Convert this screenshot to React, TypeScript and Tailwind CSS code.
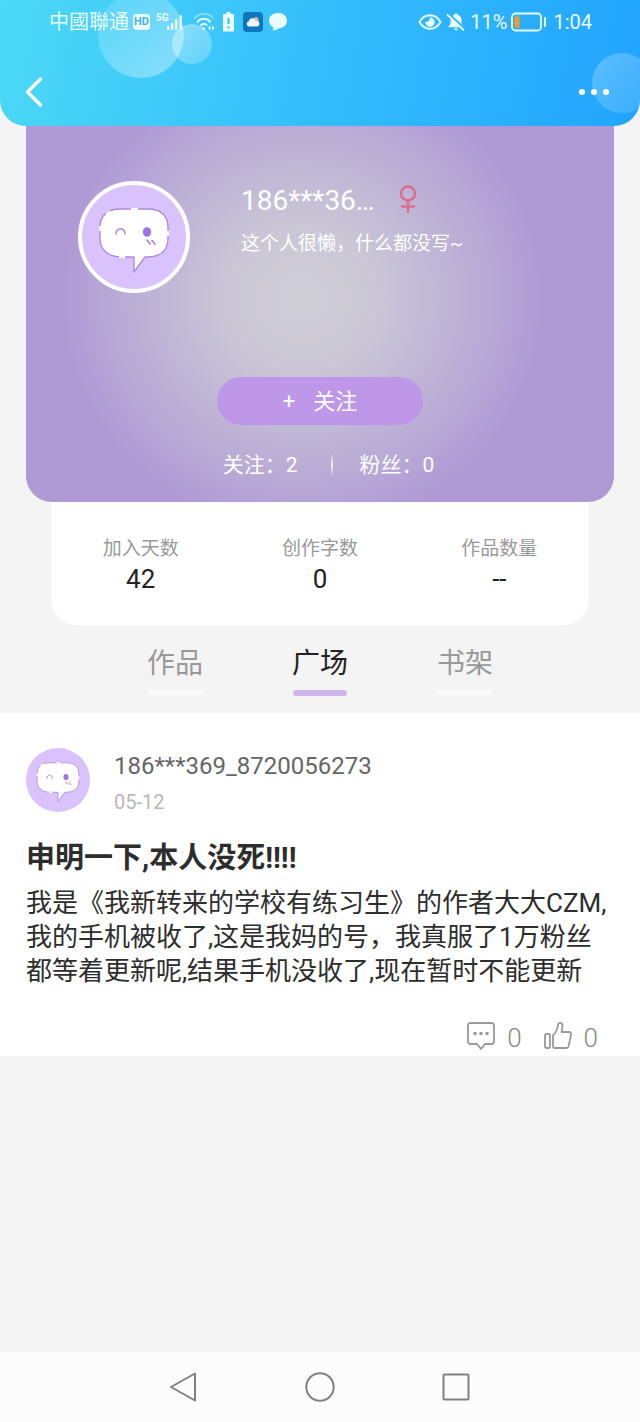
import { useState } from "react";
import clsx from "clsx";

const stats = [
  { label: "加入天数", value: "42" },
  { label: "创作字数", value: "0" },
  { label: "作品数量", value: "--" },
];

const tabs = ["作品", "广场", "书架"];

function Avatar({ className }: { className: string }) {
  return (
    <svg viewBox="0 0 104 104" className={clsx("shrink-0 rounded-full bg-[#dac3fd]", className)}>
      <path
        d="M38 24H66C80 24 86 32 86 42V53C86 66 78 72 65 72H63L52 87V72H40C26 72 18 65 18 53V42C18 31 25 24 38 24Z"
        fill="#fff"
        stroke="#b18ae0"
        strokeWidth="1.4"
        strokeLinejoin="round"
      />
      {/* breaks in the outline */}
      <path
        d="M49 24h7M18 41v5M86 46v5M37 72h6M24 29l4-3"
        stroke="#fff"
        strokeWidth="2"
      />
      <path d="M34 49c0-7 9-7 9 0" fill="none" stroke="#a87fdc" strokeWidth="1.5" strokeLinecap="round" />
      <ellipse cx="65" cy="47" rx="4.2" ry="4.8" fill="#a273e2" />
      <path d="M65 55l3 4M70 55.5l3 4" stroke="#a87fdc" strokeWidth="1.5" strokeLinecap="round" />
    </svg>
  );
}

function StatusBar() {
  return (
    <div className="relative flex h-11 items-center justify-between pr-12 pl-[49px] text-xl text-[#e9fbff]">
      <div className="flex items-center">
        <span>中國聯通</span>
        <span className="ml-1 flex h-4 w-[17px] items-center justify-center rounded bg-[#e9fbff] text-[11px] font-bold text-[#45b4e6]">
          HD
        </span>
        <span className="ml-1.5 self-start pt-0.5 text-[10px] leading-4 font-bold">5G</span>
        <svg viewBox="0 0 16 18" className="-ml-0.5 h-[18px] w-4" fill="currentColor">
          <rect x="0" y="13" width="2.4" height="4" rx="1" />
          <rect x="4" y="10" width="2.4" height="7" rx="1" />
          <rect x="8" y="6" width="2.4" height="11" rx="1" />
          <rect x="12.5" y="2" width="2.4" height="15" rx="1" />
        </svg>
        <svg viewBox="0 0 22 18" className="ml-2.5 h-[18px] w-[22px]" fill="none" stroke="currentColor" strokeWidth="2">
          <path d="M1 6C7-1 15-1 21 6" opacity="0.4" />
          <path d="M4 9.5C8 4.5 14 4.5 17.5 9.5" />
          <path d="M7.5 12.5C10 10 12 10 14 12.5" />
          <circle cx="10.5" cy="15.5" r="1.5" fill="currentColor" stroke="none" />
          <path d="M17.5 12.5v5l-2.5-2.5zM19 12.5v5l2.500-2.500z" fill="currentColor" stroke="none" />
        </svg>
        <svg viewBox="0 0 11 20" className="ml-2 h-5 w-[11px]">
          <path d="M3.5 0h4v2H10a1 1 0 0 1 1 1v15.5a1 1 0 0 1-1 1H1a1 1 0 0 1-1-1V3a1 1 0 0 1 1-1h2.5z" fill="currentColor" />
          <path d="M5.5 6v6M5.5 14.5v2" stroke="#37b9f8" strokeWidth="2" />
        </svg>
        <svg viewBox="0 0 20 20" className="ml-[9px] size-5">
          <rect width="20" height="20" rx="4" fill="#0b78bd" />
          <circle cx="13" cy="7.5" r="2.5" fill="#d6b37b" />
          <path d="M6 14.5a2.7 2.7 0 0 1-.3-5.3 3.700 3.700 0 0 1 7-.6 3 3 0 0 1 1.300 5.900z" fill="#eef5fb" />
        </svg>
        <svg viewBox="0 0 20 20" className="ml-[5px] size-5" fill="currentColor">
          <path d="M10 1c5.200 0 9 3.200 9 7.500S15.500 16 11 16.300C8.500 18 6.500 18.800 4.500 18.500c.8-1 1-2.200.6-3.300C2.500 13.800 1 11.500 1 8.500 1 4.200 4.800 1 10 1z" />
        </svg>
      </div>
      <div className="flex items-center">
        <svg viewBox="0 0 24 18" className="h-[18px] w-6" fill="none" stroke="currentColor" strokeWidth="1.8">
          <path d="M1.5 9C6.500 0 17.500 0 22.500 9C17.500 18 6.500 18 1.500 9Z" />
          <path d="M12 4.500a4.700 4.700 0 1 1-4.600 3.800c2 1.200 4.200.4 4.600-3.800z" fill="currentColor" stroke="none" />
        </svg>
        <svg viewBox="0 0 20 20" className="ml-1 size-5">
          <path d="M10 1.500c.9 0 1.400.5 1.500 1.300 2.600.7 4 2.800 4 5.500v3.500l2.300 3.400H2.200l2.300-3.400V8.300c0-2.700 1.400-4.800 4-5.500.1-.8.600-1.300 1.500-1.300zM8 16.500h4c-.4 2.400-3.600 2.400-4 0z" fill="currentColor" />
          <path d="M2.500 1.500l16 15" stroke="#2eb4fd" strokeWidth="2" />
          <path d="M1.500 2.800l16 15.200" stroke="currentColor" strokeWidth="1.8" strokeLinecap="round" />
        </svg>
        <span className="ml-1">11%</span>
        <svg viewBox="0 0 36 20" className="ml-1 h-5 w-9">
          <rect x="1" y="1.5" width="29" height="17" rx="3.5" fill="none" stroke="currentColor" strokeWidth="1.8" />
          <rect x="3.5" y="4.5" width="5" height="11" rx="1" fill="#f79a2a" />
          <path d="M34 6v8" stroke="currentColor" strokeWidth="2" strokeLinecap="round" />
        </svg>
        <span className="ml-1.5">1:04</span>
      </div>
    </div>
  );
}

function Header() {
  return (
    <header className="relative overflow-hidden rounded-b-[26px] bg-linear-[100deg] from-[#4bd9f6] via-[#35bdfc] to-[#22a4ff]">
      {/* decorative bubbles */}
      <span className="absolute -top-2 left-[98px] size-[86px] rounded-full bg-linear-to-br from-white/10 to-white/40" />
      <span className="absolute top-6 left-[172px] size-10 rounded-full bg-linear-to-br from-white/40 to-white/20" />
      <span className="absolute top-[53px] -right-3 size-[60px] rounded-full bg-linear-to-br from-white/25 to-white/10" />
      <StatusBar />
      <div className="relative flex h-[82px] items-center justify-between px-6 pt-3.5 text-white">
        <button type="button" aria-label="返回">
          <svg viewBox="0 0 20 32" className="h-8 w-5" fill="none" stroke="currentColor" strokeWidth="3.4" strokeLinecap="round" strokeLinejoin="round">
            <path d="M16.500 3L3.500 16l13 13" />
          </svg>
        </button>
        <button type="button" aria-label="更多" className="flex gap-1.5 px-[7px]">
          <i className="size-1.5 rounded-full bg-white" />
          <i className="size-1.5 rounded-full bg-white" />
          <i className="size-1.5 rounded-full bg-white" />
        </button>
      </div>
    </header>
  );
}

function ProfileCard() {
  return (
    <section className="mx-[26px] rounded-b-[26px] bg-[radial-gradient(ellipse_41%_62%_at_47%_46%,#cfced6_0%,#cbc7d6_30%,#b9abd6_75%,#b09ad6_100%)] pt-[55px] pb-[21px] text-white">
      <div className="flex pl-[52px]">
        <Avatar className="size-28 border-4 border-white" />
        <div className="ml-[51px]">
          <div className="flex h-10 items-center gap-6">
            <h1 className="text-[28px]">186***36…</h1>
            <svg viewBox="0 0 18 28" className="mt-1 h-7 w-[18px] self-start" fill="none" stroke="#df6b8b" strokeWidth="2.4">
              <circle cx="9" cy="8.5" r="7" />
              <path d="M9 15.500V27M3 21.500h12" strokeLinecap="round" />
            </svg>
          </div>
          <p className="mt-2 text-[19px] leading-[30px]">这个人很懒，什么都没写~</p>
        </div>
      </div>
      <button
        type="button"
        className="mx-auto mt-[84px] flex h-12 w-[206px] items-center justify-center gap-[18px] rounded-full bg-[#bf97e8] text-[22px]"
      >
        <span>+</span>
        <span>关注</span>
      </button>
      <div className="mt-6 flex items-center justify-center pl-[17px] text-[21px] leading-8">
        <span>关注：2</span>
        <span className="mr-[27px] ml-[33px] h-6 w-0.5 bg-linear-to-b from-white/0 via-white/80 to-white/0" />
        <span>粉丝：0</span>
      </div>
    </section>
  );
}

function Stats() {
  return (
    <dl className="mx-[51px] grid grid-cols-3 rounded-b-[26px] bg-white pt-[33px] pb-[30px] text-center">
      {stats.map((item) => (
        <div key={item.label}>
          <dt className="text-[19px] leading-7 text-[#999]">{item.label}</dt>
          <dd className="text-[26px] leading-8 text-[#222]">{item.value}</dd>
        </div>
      ))}
    </dl>
  );
}

function Tabs() {
  const [active, setActive] = useState("广场");
  return (
    <nav className="flex justify-center gap-[89px] pt-[19px] pb-[17px]">
      {tabs.map((tab) => (
        <button
          key={tab}
          type="button"
          onClick={() => setActive(tab)}
          className={clsx("flex flex-col items-center text-[28px] leading-10", active === tab ? "text-[#222]" : "text-[#999]")}
        >
          {tab}
          <span className={clsx("mt-1.5 h-1.5 w-[54px] rounded-full", active === tab ? "bg-[#cfb5e9]" : "bg-[#fafafa]")} />
        </button>
      ))}
    </nav>
  );
}

function Post() {
  return (
    <article className="bg-white px-[26px] pt-[35px]">
      <div className="flex">
        <Avatar className="size-16" />
        <div className="ml-6">
          <div className="text-2xl leading-9 text-[#666]">186***369_8720056273</div>
          <time className="block text-xl leading-9 text-[#b8b8b8]">05-12</time>
        </div>
      </div>
      <h2 className="mt-4 text-[29px] leading-[44px] font-bold text-[#2d2d2d]">申明一下,本人没死!!!!</h2>
      <p className="mt-1.5 text-[26px] leading-[34px] text-[#2d2d2d]">
        我是《我新转来的学校有练习生》的作者大大CZM,我的手机被收了,这是我妈的号，我真服了1万粉丝都等着更新呢,结果手机没收了,现在暂时不能更新
      </p>
      <div className="mt-7 flex justify-end gap-[22px] pr-4 text-[26px] leading-9 font-light text-[#888]">
        <button type="button" aria-label="评论" className="flex items-center gap-3">
          <svg viewBox="0 0 28 30" className="h-[30px] w-7" fill="none" stroke="#999" strokeWidth="1.8" strokeLinejoin="round">
            <path d="M3.500 2h21a2.500 2.500 0 0 1 2.500 2.500v16a2.500 2.500 0 0 1-2.500 2.500H18l-4 5-4-5H3.500A2.500 2.500 0 0 1 1 20.500v-16A2.500 2.500 0 0 1 3.500 2z" />
            <path d="M8 12.500h.01M14 12.500h.01M20 12.500h.01" strokeWidth="3.6" strokeLinecap="round" />
          </svg>
          <span className="pt-1">0</span>
        </button>
        <button type="button" aria-label="点赞" className="flex items-center gap-3">
          <svg viewBox="0 0 28 30" className="h-[30px] w-7" fill="none" stroke="#999" strokeWidth="1.8" strokeLinejoin="round">
            <rect x="1" y="13" width="5" height="14" rx="1.5" />
            <path d="M9 14.500c3.500-3 4.500-6.500 5-11 .4-2.400 4.200-2.200 4.500 1 .1 2.500-.5 4.500-1 6.500h7.500c1.600 0 2.300 1 2 2.500l-2.300 11.500c-.3 1.300-1 2-2.300 2H11c-1.300 0-2-.7-2-2z" />
          </svg>
          <span className="pt-1">0</span>
        </button>
      </div>
    </article>
  );
}

function SystemNav() {
  return (
    <footer className="mt-auto flex h-[70px] items-center justify-center gap-[104px] bg-[#fcfcfc] text-[#808080]">
      <button type="button" aria-label="后退">
        <svg viewBox="0 0 32 32" className="size-8" fill="none" stroke="currentColor" strokeWidth="2" strokeLinejoin="round">
          <path d="M27 2.500v27L3 16z" />
        </svg>
      </button>
      <button type="button" aria-label="主页">
        <svg viewBox="0 0 32 32" className="size-8" fill="none" stroke="currentColor" strokeWidth="2">
          <circle cx="16" cy="16" r="13.7" />
        </svg>
      </button>
      <button type="button" aria-label="最近任务">
        <svg viewBox="0 0 32 32" className="size-8" fill="none" stroke="currentColor" strokeWidth="2">
          <rect x="3.5" y="3.5" width="25" height="25" rx="1" />
        </svg>
      </button>
    </footer>
  );
}

export default function App() {
  return (
    <div className="flex min-h-screen flex-col bg-[#f4f4f4] font-['Roboto','Noto_Sans_CJK_SC',sans-serif]">
      <Header />
      <main>
        <ProfileCard />
        <Stats />
        <Tabs />
        <Post />
      </main>
      <SystemNav />
    </div>
  );
}
